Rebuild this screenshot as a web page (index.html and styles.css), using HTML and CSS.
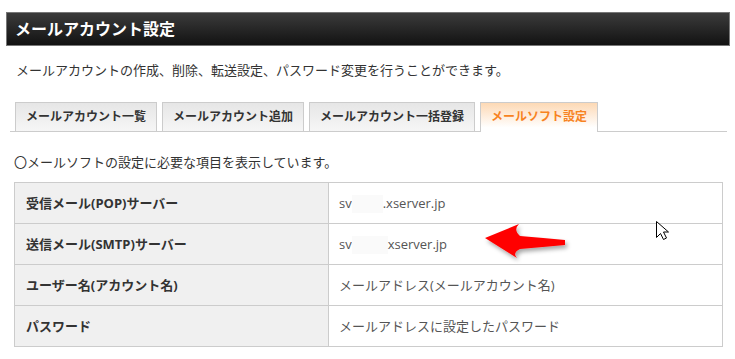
FILE: index.html
```html
<!DOCTYPE html>
<html lang="ja">
<head>
  <meta charset="utf-8" />
  <meta name="viewport" content="width=device-width, initial-scale=1.0" />
  <title>メールアカウント設定</title>
  <link rel="stylesheet" href="styles.css">
</head>
<body>
  <div class="page">
    <h1 class="page-title">メールアカウント設定</h1>
    <p class="lead">メールアカウントの作成、削除、転送設定、パスワード変更を行うことができます。</p>

    <ul class="tabs">
      <li class="tab">メールアカウント一覧</li>
      <li class="tab">メールアカウント追加</li>
      <li class="tab">メールアカウント一括登録</li>
      <li class="tab active">メールソフト設定</li>
    </ul>

    <p class="note">〇メールソフトの設定に必要な項目を表示しています。</p>

    <table class="settings">
      <tr>
        <th>受信メール(POP)サーバー</th>
        <td>sv<span class="mask mask-pop"></span>.xserver.jp</td>
      </tr>
      <tr>
        <th>送信メール(SMTP)サーバー</th>
        <td>sv<span class="mask mask-smtp"></span>xserver.jp</td>
      </tr>
      <tr>
        <th>ユーザー名(アカウント名)</th>
        <td>メールアドレス(メールアカウント名)</td>
      </tr>
      <tr>
        <th>パスワード</th>
        <td>メールアドレスに設定したパスワード</td>
      </tr>
    </table>

    <!-- annotation drawn over the screenshot -->
    <svg class="overlay" width="735" height="359" viewBox="0 0 735 359">
      <defs>
        <filter id="shadow" x="-20%" y="-30%" width="150%" height="170%">
          <feDropShadow dx="2" dy="3" stdDeviation="2" flood-color="#000" flood-opacity="0.35" />
        </filter>
      </defs>
      <path filter="url(#shadow)" fill="#ff0000"
        d="M485 238 L519 224 Q513 230 520 236 Q544 238 565 240 L565 245 Q543 247 520 249 Q512 253 517 258 Z" />
      <path fill="#fff" stroke="#000" stroke-width="1" stroke-linejoin="round"
        d="M656.5 221.5 L656.5 237.5 L660.5 233.5 L663.5 239.5 L666.5 238 L663.5 232 L668.5 232 Z" />
    </svg>
  </div>
</body>
</html>
```

FILE: styles.css
```css
html, body {
  margin: 0;
  background: #fff;
}

body {
  font-family: "Open Sans", "Noto Sans CJK JP", sans-serif;
  color: #333;
}

.page {
  position: relative;
  width: 735px;
  height: 359px;
  overflow: hidden;
}

.page-title {
  margin: 12px 5px 0 6px;
  height: 32px;
  padding-left: 8px;
  border: 1px solid #777;
  background: linear-gradient(to bottom, #3b3b3b, #121212);
  color: #fff;
  font-size: 16px;
  font-weight: bold;
  line-height: 32px;
}

.lead {
  margin: 14px 0 0 16px;
  font-size: 13px;
  line-height: 20px;
  color: #333;
}

.tabs {
  display: flex;
  gap: 5px;
  list-style: none;
  margin: 22px 8px 0 10px;
  padding: 0 0 0 5px;
  border-bottom: 1px solid #ccc;
}

.tab {
  padding: 0 10px;
  border: 1px solid #ccc;
  border-bottom: none;
  background: linear-gradient(to bottom, #e6e6e6, #f6f6f6);
  font-size: 12px;
  font-weight: bold;
  line-height: 28px;
  color: #333;
}

.tab.active {
  margin-bottom: -1px;
  padding-bottom: 1px;
  background: linear-gradient(to bottom, #fdd9b5, #ffffff 85%);
  color: #f7831f;
}

.note {
  margin: 20px 0 0 14px;
  font-size: 13px;
  line-height: 20px;
  color: #333;
}

.settings {
  margin: 10px 0 0 14px;
  width: 709px;
  border-collapse: collapse;
  font-size: 13px;
}

.settings th,
.settings td {
  height: 40px;
  padding: 0 10px;
  border: 1px solid #ccc;
  text-align: left;
  line-height: 20px;
}

.settings th {
  width: 292px;
  padding-left: 11px;
  background: #f0f0f0;
  font-weight: bold;
  color: #333;
}

.settings td {
  color: #555;
  white-space: nowrap;
}

.mask {
  display: inline-block;
  height: 18px;
  vertical-align: middle;
  background: #fafafa;
}

.mask-pop {
  width: 31px;
}

.mask-smtp {
  width: 36px;
}

.overlay {
  position: absolute;
  top: 0;
  left: 0;
  pointer-events: none;
}
```
